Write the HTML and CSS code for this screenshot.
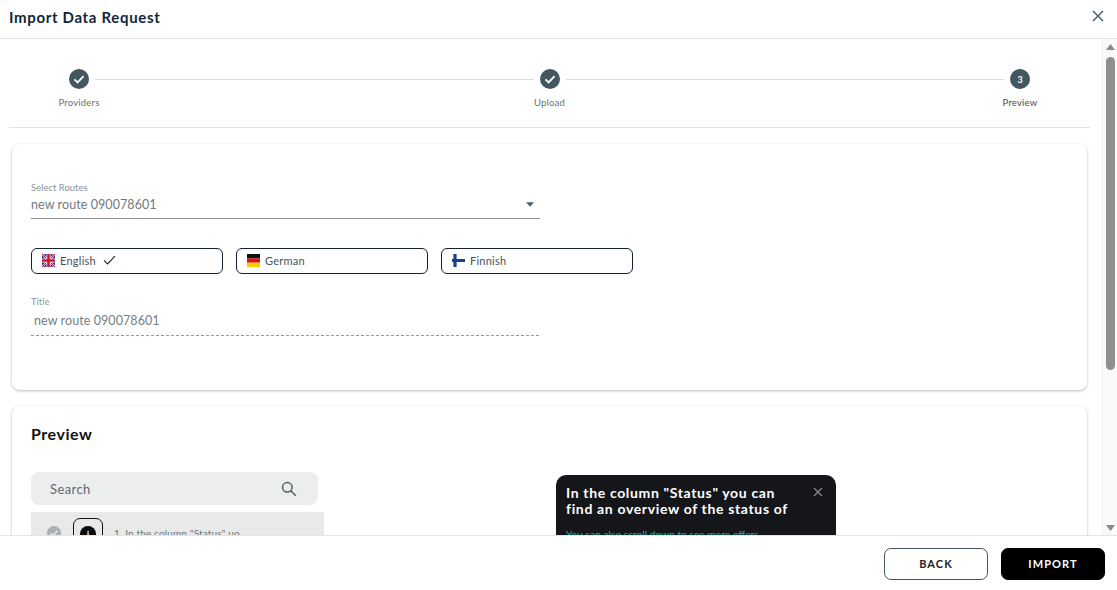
FILE: index.html
```html
<!DOCTYPE html>
<html lang="en">
<head>
<meta charset="utf-8">
<title>Import Data Request</title>
<link rel="stylesheet" href="styles.css">
</head>
<body>
<div class="modal">
  <header class="head">
    <h1>Import Data Request</h1>
    <svg class="close" viewBox="0 0 12 12"><path d="M1 1l10 10M11 1L1 11"/></svg>
  </header>
  <div class="middle">
    <main class="content">
      <section class="stepper">
        <div class="step-track">
          <span class="dot"><svg viewBox="0 0 20 20"><path d="M5.4 10.3l3.2 3.1 6-6.2"/></svg></span>
          <span class="link"></span>
          <span class="dot"><svg viewBox="0 0 20 20"><path d="M5.4 10.3l3.2 3.1 6-6.2"/></svg></span>
          <span class="link"></span>
          <span class="dot num">3</span>
        </div>
        <div class="step-labels">
          <span>Providers</span><span>Upload</span><span class="current">Preview</span>
        </div>
      </section>
      <section class="card form-card">
        <div class="select">
          <label>Select Routes</label>
          <div class="select-row">
            <span>new route 090078601</span>
            <svg class="caret" viewBox="0 0 10 5"><path d="M0 0h9L4.500 5z"/></svg>
          </div>
        </div>
        <div class="chips">
          <div class="chip">
            <svg class="flag" viewBox="0 0 13 13">
              <rect width="13" height="13" fill="#1a2f80"/>
              <path d="M0 0l13 13M13 0L0 13" stroke="#fff" stroke-width="2.200"/>
              <path d="M0 0l13 13M13 0L0 13" stroke="#d3122e" stroke-width="1.100"/>
              <path d="M6.500 0v13M0 6.500h13" stroke="#fff" stroke-width="4"/>
              <path d="M6.500 0v13M0 6.500h13" stroke="#d3122e" stroke-width="2.600"/>
            </svg>
            <span>English</span>
            <svg class="tick" viewBox="0 0 14 11"><path d="M1 6l3.800 3.800L13 1.200"/></svg>
          </div>
          <div class="chip">
            <svg class="flag" viewBox="0 0 13 13">
              <rect width="13" height="4.400" fill="#111"/>
              <rect y="4.400" width="13" height="4.300" fill="#d8121a"/>
              <rect y="8.700" width="13" height="4.300" fill="#fc0"/>
            </svg>
            <span>German</span>
          </div>
          <div class="chip">
            <svg class="flag" viewBox="0 0 13 13">
              <rect width="13" height="13" fill="#fff"/>
              <path d="M3 0v13M0 6.500h13" stroke="#1a3f8f" stroke-width="3.200"/>
            </svg>
            <span>Finnish</span>
          </div>
        </div>
        <div class="title-field">
          <label>Title</label>
          <div class="title-value">new route 090078601</div>
        </div>
      </section>
      <section class="card preview-card">
        <h2>Preview</h2>
        <div class="preview-body">
          <div class="list">
            <div class="search">
              <span>Search</span>
              <svg viewBox="0 0 18 18"><circle cx="7.300" cy="7.300" r="4.800"/><path d="M10.800 10.800l5 5"/></svg>
            </div>
            <div class="row">
              <span class="row-check"><svg viewBox="0 0 14 14"><path d="M3.500 7.200l2.400 2.400 4.600-4.800"/></svg></span>
              <span class="row-box"><span class="row-i">i</span></span>
              <span class="row-text">1. In the column "Status" uo...</span>
            </div>
          </div>
          <aside class="tip">
            <div class="tip-head">
              <p>In the column "Status" you can find an overview of the status of</p>
              <svg viewBox="0 0 10 10"><path d="M1 1l8 8M9 1L1 9"/></svg>
            </div>
            <p class="tip-note">You can also scroll down to see more offers</p>
          </aside>
        </div>
      </section>
    </main>
    <div class="scrollbar">
      <svg class="arrow" viewBox="0 0 9 6"><path d="M4.500 0L9 6H0z"/></svg>
      <div class="thumb"></div>
      <div class="track"></div>
      <svg class="arrow" viewBox="0 0 9 6"><path d="M0 0h9L4.500 6z"/></svg>
    </div>
  </div>
  <footer class="foot">
    <button class="btn back">BACK</button>
    <button class="btn import">IMPORT</button>
  </footer>
</div>
</body>
</html>
```
FILE: styles.css
```css
* { box-sizing: border-box; }
html, body { margin: 0; height: 100%; }
body { font-family: "Lato", "Noto Sans", sans-serif; background: #fff; color: #0f2233; overflow: hidden; }
.modal { width: 1117px; height: 590px; display: flex; flex-direction: column; }

.head { height: 39px; flex: none; display: flex; align-items: center; justify-content: space-between; padding: 0 13px 4px 9px; border-bottom: 1px solid #e4e4e4; }
.head h1 { margin: 0; font-size: 15px; font-weight: 700; letter-spacing: 0.67px; color: #10263a; }
.close { width: 12px; height: 12px; margin-top: -2px; }
.close path { stroke: #3f5560; stroke-width: 1.400; fill: none; }

.middle { flex: 1; min-height: 0; display: flex; }
.content { flex: 1; min-width: 0; overflow: hidden; padding: 30px 12px 0 9px; }

.stepper { height: 59px; border-bottom: 1px solid #e2e2e2; }
.step-track { display: flex; align-items: center; padding: 0 60px 0 60px; }
.dot { width: 20px; height: 20px; flex: none; border-radius: 50%; background: #42575f; display: flex; align-items: center; justify-content: center; color: #fff; font-size: 9px; font-weight: 700; padding-top: 1px; }
.dot svg { width: 20px; height: 20px; margin-top: -1px; }
.dot path { fill: none; stroke: #fff; stroke-width: 1.800; }
.link { flex: 1; height: 1px; background: #dcdcdc; margin: 0 6px; }
.step-labels { display: flex; justify-content: space-between; padding: 0 40px; margin-top: 8px; }
.step-labels span { width: 60px; text-align: center; font-size: 9.500px; line-height: 12px; letter-spacing: 0.2px; color: #6e6e6e; }
.step-labels .current { color: #4a4a4a; }

.card { background: #fff; border-radius: 8px; margin-left: 3px; margin-right: 3px; box-shadow: 0 1px 3px rgba(0,0,0,.28); }
.form-card { height: 246px; margin-top: 16px; padding: 38px 19px 0; }
.select { width: 509px; border-bottom: 1px solid #8c8c8c; height: 37px; }
.select label { display: block; font-size: 9.500px; line-height: 12px; color: #8a9299; }
.select-row { display: flex; align-items: center; justify-content: space-between; padding: 2px 5px 0 0; height: 19px; font-size: 12.500px; letter-spacing: 0.08px; color: #6f7a80; }
.caret { width: 9px; height: 5px; }
.caret path { fill: #4d5f68; }

.chips { display: flex; gap: 13px; margin-top: 29px; }
.chip { width: 192px; height: 26px; border: 1px solid #0f2233; border-radius: 6px; display: flex; align-items: center; padding: 0 0 2px 10px; font-size: 11px; letter-spacing: 0.25px; color: #45525c; }
.flag { width: 13px; height: 13px; margin-right: 5px; flex: none; }
.tick { width: 13px; height: 10px; margin-left: 7px; }
.tick path { fill: none; stroke: #17283a; stroke-width: 1.200; }

.title-field { width: 508px; margin-top: 22px; }
.title-field label { display: block; font-size: 9.500px; line-height: 12px; color: #8e969d; }
.title-value { height: 26px; padding: 2px 0 0 3px; font-size: 12.500px; line-height: 17px; letter-spacing: 0.08px; color: #757f86; border-bottom: 1px dashed #9a9a9a; margin-top: 2px; }

.preview-card { margin-top: 16px; height: 300px; padding: 18px 19px 0; }
.preview-card h2 { margin: 0; font-size: 16px; line-height: 20px; font-weight: 700; letter-spacing: 0.55px; color: #111; }
.preview-body { display: flex; margin-top: 28px; }
.list { width: 293px; flex: none; }
.search { width: 287px; height: 33px; background: #eceeee; border-radius: 8px; display: flex; align-items: center; justify-content: space-between; padding: 0 20px 0 19px; font-size: 13px; letter-spacing: 0.4px; color: #5b6870; }
.search svg { width: 18px; height: 18px; }
.search circle, .search path { fill: none; stroke: #4f6068; stroke-width: 1.500; }
.row { margin-top: 7px; height: 60px; background: #e8e9e9; display: flex; align-items: flex-start; padding: 6px 0 0 16px; }
.row-check { width: 14px; height: 14px; margin-top: 8px; border-radius: 50%; background: #aab0b2; flex: none; }
.row-check svg { display: block; width: 14px; height: 14px; }
.row-check path { fill: none; stroke: #e8e9e9; stroke-width: 1.500; }
.row-box { width: 30px; height: 40px; margin-left: 12px; border: 1px solid #111; border-radius: 7px; display: flex; justify-content: center; padding-top: 7px; flex: none; }
.row-i { width: 16px; height: 16px; border-radius: 50%; background: #0a0a0a; color: #fff; font-size: 10px; font-weight: 700; line-height: 16px; text-align: center; }
.row-text { margin: 9px 0 0 11px; font-size: 10px; line-height: 12px; letter-spacing: 0.15px; color: #6d7479; }

.tip { width: 280px; height: 90px; flex: none; margin: 3px 0 0 232px; background: #14161a; border-radius: 10px; padding: 10px 10px 9px; color: #fff; }
.tip-head { display: flex; justify-content: space-between; align-items: flex-start; }
.tip-head p { margin: 0; width: 226px; font-size: 14px; line-height: 16px; font-weight: 700; letter-spacing: 0.65px; }
.tip-head svg { width: 10px; height: 10px; margin: 2px 3px 0 0; flex: none; }
.tip-head path { fill: none; stroke: #8b9096; stroke-width: 1.100; }
.tip-note { margin: 10px 0 0; font-size: 10.200px; line-height: 14px; color: #12b5b8; white-space: nowrap; }

.scrollbar { width: 15px; flex: none; background: #fafafa; border-left: 1px solid #f0f0f0; display: flex; flex-direction: column; align-items: center; padding: 5px 0 4px; }
.arrow { width: 9px; height: 6px; flex: none; }
.arrow path { fill: #8a8a8a; }
.thumb { width: 9px; height: 313px; margin-top: 7px; background: #8f8f8f; border-radius: 5px; flex: none; }
.track { flex: 1; }

.foot { height: 55px; flex: none; border-top: 1px solid #e4e4e4; display: flex; justify-content: flex-end; gap: 13px; padding: 12px 12px 0 0; }
.btn { width: 104px; height: 32px; border-radius: 7px; padding: 0 0 2px; font-family: inherit; font-size: 11px; font-weight: 700; letter-spacing: 1.100px; }
.back { background: #fff; border: 1px solid #42575f; color: #222; }
.import { background: #000; border: 1px solid #000; color: #fff; }
```
